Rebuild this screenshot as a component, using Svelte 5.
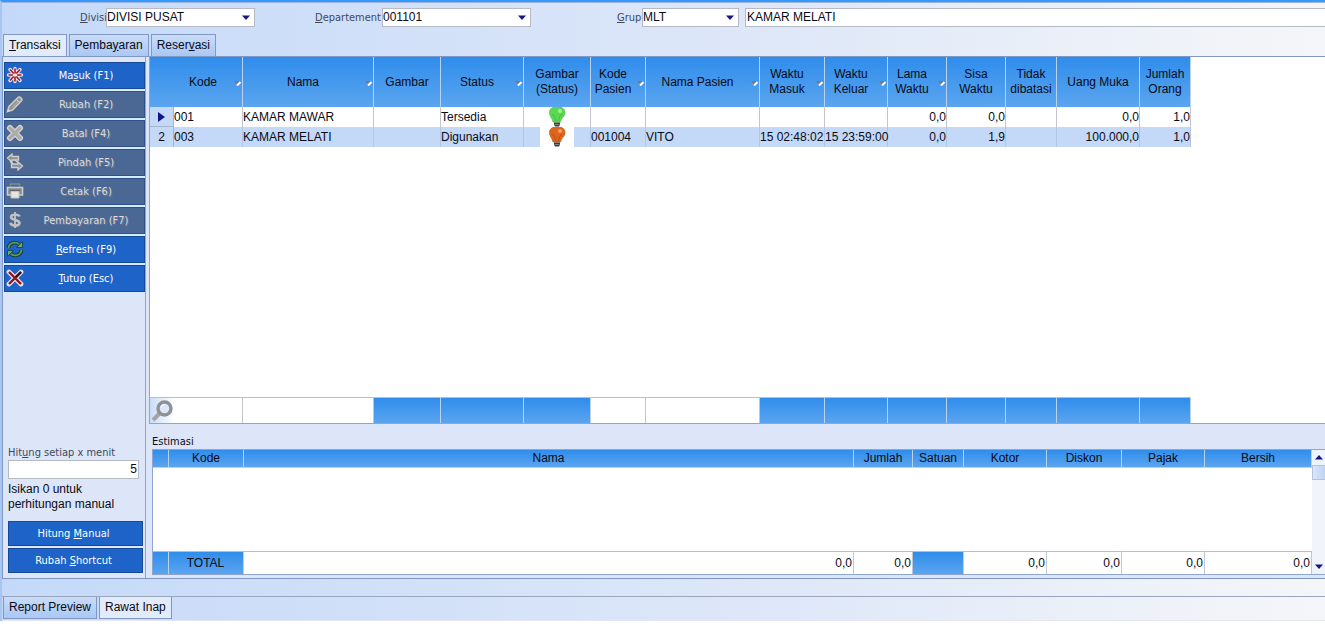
<script lang="ts">
  type Action = { label: string; icon: string; disabled?: boolean };
  type Column = { label: string; width: number; sortable?: boolean; searchable?: boolean; numeric?: boolean };

  let divisi = $state('DIVISI PUSAT');
  let departement = $state('001101');
  let grup = $state('MLT');
  let namaGrup = $state('KAMAR MELATI');
  let interval = $state('5');

  // "&" marks the access key that gets underlined
  const tabs = ['&Transaksi', 'Pemba&yaran', 'Reser&vasi'];
  let activeTab = $state(0);

  const windows = ['Report Preview', 'Rawat Inap'];
  let activeWindow = $state(1);

  const actions: Action[] = [
    { label: 'Ma&suk (F1)', icon: 'new' },
    { label: 'Rubah (F2)', icon: 'edit', disabled: true },
    { label: 'Batal (F4)', icon: 'cancel', disabled: true },
    { label: 'Pindah (F5)', icon: 'move', disabled: true },
    { label: 'Cetak (F6)', icon: 'print', disabled: true },
    { label: 'Pembayaran (F7)', icon: 'pay', disabled: true },
    { label: '&Refresh (F9)', icon: 'refresh' },
    { label: '&Tutup (Esc)', icon: 'close' }
  ];

  const columns: Column[] = [
    { label: 'Kode', width: 69, sortable: true, searchable: true },
    { label: 'Nama', width: 131, sortable: true, searchable: true },
    { label: 'Gambar', width: 67 },
    { label: 'Status', width: 83, sortable: true },
    { label: 'Gambar (Status)', width: 67 },
    { label: 'Kode Pasien', width: 55, sortable: true, searchable: true },
    { label: 'Nama Pasien', width: 114, sortable: true, searchable: true },
    { label: 'Waktu Masuk', width: 65, sortable: true },
    { label: 'Waktu Keluar', width: 63, sortable: true },
    { label: 'Lama Waktu', width: 59, sortable: true, numeric: true },
    { label: 'Sisa Waktu', width: 59, numeric: true },
    { label: 'Tidak dibatasi', width: 51 },
    { label: 'Uang Muka', width: 83, numeric: true },
    { label: 'Jumlah Orang', width: 51, numeric: true }
  ];
  const gridWidth = 24 + columns.reduce((sum, c) => sum + c.width, 0);

  const rooms = [
    ['001', 'KAMAR MAWAR', '', 'Tersedia', 'free', '', '', '', '', '0,0', '0,0', '', '0,0', '1,0'],
    ['003', 'KAMAR MELATI', '', 'Digunakan', 'used', '001004', 'VITO', '15 02:48:02', '15 23:59:00', '0,0', '1,9', '', '100.000,0', '1,0']
  ];

  const estimateColumns = [
    { label: 'Kode', width: 75, total: 'TOTAL' },
    { label: 'Nama', width: 0, total: '0,0' },
    { label: 'Jumlah', width: 59, total: '0,0' },
    { label: 'Satuan', width: 51, total: '' },
    { label: 'Kotor', width: 83, total: '0,0' },
    { label: 'Diskon', width: 75, total: '0,0' },
    { label: 'Pajak', width: 83, total: '0,0' },
    { label: 'Bersih', width: 107, total: '0,0' }
  ];
</script>

{#snippet accel(text: string)}
  {@const at = text.indexOf('&')}
  {#if at < 0}{text}{:else}{text.slice(0, at)}<u>{text[at + 1]}</u>{text.slice(at + 2)}{/if}
{/snippet}

{#snippet arrow(up = false)}
  <svg class="arrow" width="8" height="5" viewBox="0 0 8 5" aria-hidden="true">
    <path d={up ? 'M0 4.5 4 0 8 4.5z' : 'M0 .5h8L4 5z'} fill="#15158a" />
  </svg>
{/snippet}

{#snippet bulb(used: boolean)}
  <svg width="34" height="20" viewBox="0 0 34 20" role="img" aria-label={used ? 'Digunakan' : 'Tersedia'}>
    {#if used}<rect width="34" height="20" fill="#fff" />{/if}
    <path
      d="M13 15C12.500 11 9.500 9.500 9.500 5.500 9.500 2 12 .3 15 .3h4.500c3 0 5.500 2 5.500 5.200 0 4-4 5.500-4.500 9.500z"
      fill={used ? '#de6519' : '#5ad850'}
      stroke={used ? '#c25a18' : '#4cc848'}
      stroke-width=".8"
    />
    <path d="M12 7c2 1 3 4 4 7M22 7c-2 1-3 4-3.500 7" fill="none" stroke={used ? '#a8430b' : '#36ae3b'} opacity=".6" />
    <circle cx="20" cy="4" r="2" fill={used ? '#f8a162' : '#a7f29b'} />
    <path d="M14 15.500h6v2l-1 2h-4l-1-2z" fill="#403a38" />
    <path d="M14.500 17.500h5" stroke="#9a9490" stroke-width=".8" />
  </svg>
{/snippet}

{#snippet icon(name: string)}
  <svg class="icon" width="18" height="18" viewBox="0 0 18 18" fill="none" aria-hidden="true">
    {#if name === 'new'}
      <path d="M9 2.500v13M2.500 9h13M4 3.500l10 11M14 3.500l-10 11" stroke="#f1dde3" stroke-width="3.400" stroke-linecap="round" />
      <path d="M9 2.500v5M9 10.500v5M2.500 9h4.500M11 9h4.500M4 3.500l3.700 4M10.300 10.500l3.700 4M14 3.500l-3.700 4M7.700 10.500l-3.700 4" stroke="#96202c" stroke-width="1.600" />
    {:else if name === 'edit'}
      <path d="M1.500 16.500 3 11.500 12 2.500c1.500-1.500 5 1.500 3.500 3.300L6.500 15z" fill="#8f9192" stroke="#c9c9c7" stroke-width="1.600" />
      <path d="m6 12.500 6.500-6.500" stroke="#b8b8b6" />
      <path d="M10.500 4.500l3.500 3.200" stroke="#d8d8d6" />
      <path d="m1 17 1.500-3 1.700 1.500z" fill="#d8d8d6" />
    {:else if name === 'cancel'}
      <path d="m4 4 10 10M14 4 4 14" stroke="#d6d7d6" stroke-width="6" stroke-linecap="round" />
      <path d="m4 4 10 10M14 4 4 14" stroke="#acaca8" stroke-width="3.400" stroke-linecap="round" />
    {:else if name === 'move'}
      <path d="M1.500 5 6 1v2.500h6.500v3.500H6V9z" fill="#8e8f8e" stroke="#cfcfcd" stroke-width="1.300" />
      <path d="M16.500 13 12 9v2H5.500v3.500H12V17z" fill="#8e8f8e" stroke="#cfcfcd" stroke-width="1.300" />
      <path d="M4 8.500 7 11M9 7l3 2.500" stroke="#cfcfcd" stroke-width="1.500" />
    {:else if name === 'print'}
      <path d="M4.500 4.500V2h9v2.500" stroke="#85888c" stroke-width="1.500" />
      <path d="M1.500 5.500h15v7.500h-15z" fill="#85878a" stroke="#cdcdcc" stroke-width="1.600" />
      <path d="M5 9.500h8V16H5z" fill="#e4e4e3" stroke="#c4c4c2" />
      <path d="M4 8.500h10" stroke="#5e6368" />
    {:else if name === 'pay'}
      <path d="M9 1v16" stroke="#b9bab9" stroke-width="2" />
      <path d="M13.500 5.500C13 3.500 5 2.500 5 6s8.500 2.300 8.500 6-8.500 3.300-9-.2" stroke="#c2c2c0" stroke-width="2.600" />
    {:else if name === 'refresh'}
      <path d="M2.500 8C3 3 9 1 13 4M15.500 10c-.5 5-6.500 7-10.500 4" stroke="#173f38" stroke-width="3.800" />
      <path d="M2.500 8C3 3 9 1 13 4M15.500 10c-.5 5-6.500 7-10.500 4" stroke="#5f9a5c" stroke-width="1.800" />
      <path d="M16.500 1.500v6h-6zM1.500 16.500v-6h6z" fill="#6fa763" stroke="#173f38" stroke-width=".8" />
    {:else}
      <path d="m3 3 12 12M15 3 3 15" stroke="#e8dce6" stroke-width="4.800" stroke-linecap="round" />
      <path d="m3 3 12 12M15 3 3 15" stroke="#8a141c" stroke-width="2.400" />
      <path d="m10 8 5-5" stroke="#3a1016" stroke-width="2.400" />
    {/if}
  </svg>
{/snippet}

<div class="app">
  <form class="filters" onsubmit={(e) => e.preventDefault()}>
    <div class="field divisi">
      <label for="divisi">{@render accel('&Divisi')}</label>
      <span class="combo">
        <select id="divisi" bind:value={divisi}><option>DIVISI PUSAT</option></select>
        {@render arrow()}
      </span>
    </div>
    <div class="field departement">
      <label for="departement">{@render accel('&Departement')}</label>
      <span class="combo">
        <select id="departement" bind:value={departement}><option>001101</option></select>
        {@render arrow()}
      </span>
    </div>
    <div class="field grup">
      <label for="grup">{@render accel('&Grup')}</label>
      <span class="combo small">
        <select id="grup" bind:value={grup}><option>MLT</option></select>
        {@render arrow()}
      </span>
      <input class="grup-name" aria-label="Nama grup" bind:value={namaGrup} />
    </div>
  </form>

  <nav class="tabs">
    {#each tabs as tab, i}
      <button class:active={activeTab === i} onclick={() => (activeTab = i)}>{@render accel(tab)}</button>
    {/each}
  </nav>

  <main class="page">
    <aside class="sidebar">
      <div class="actions">
        {#each actions as action}
          <button class="action" disabled={action.disabled}>
            {@render icon(action.icon)}
            <span>{@render accel(action.label)}</span>
          </button>
        {/each}
      </div>

      <div class="timer">
        <label for="interval">{@render accel('Hit&ung setiap x menit')}</label>
        <input id="interval" bind:value={interval} />
        <p>Isikan 0 untuk perhitungan manual</p>
        <button>{@render accel('Hitung &Manual')}</button>
        <button>{@render accel('Rubah &Shortcut')}</button>
      </div>
    </aside>

    <section class="content">
      <div class="grid">
        <table class="rooms" style="width: {gridWidth}px">
          <colgroup>
            <col class="indicator-col" />
            {#each columns as column}
              <col style="width: {column.width}px" />
            {/each}
          </colgroup>
          <thead>
            <tr>
              <th class="corner"></th>
              {#each columns as column}
                <th class:sortable={column.sortable}>
                  {column.label}
                  {#if column.sortable}
                    <svg class="sort" width="7" height="6" viewBox="0 0 7 6" aria-hidden="true">
                      <path d="M0 1h7L3.500 5z" fill="#77797c" />
                      <path d="M3 5.500 6.500 2" stroke="#fff" stroke-width="2" />
                    </svg>
                  {/if}
                </th>
              {/each}
            </tr>
          </thead>
          <tbody>
            {#each rooms as room, r}
              <tr class:alt={r % 2 === 1}>
                <th class="indicator" scope="row">
                  {#if r === 0}
                    <svg width="7" height="10" viewBox="0 0 7 10" role="img" aria-label="Baris aktif">
                      <path d="M0 0v10l7-5z" fill="#15158a" />
                    </svg>
                  {:else}{r + 1}{/if}
                </th>
                {#each room as value, c}
                  {#if c === 4}
                    <td class="picture">{@render bulb(value === 'used')}</td>
                  {:else}
                    <td class:numeric={columns[c].numeric}>{value}</td>
                  {/if}
                {/each}
              </tr>
            {/each}
            <tr class="filler"><td colspan={columns.length + 1}></td></tr>
          </tbody>
          <tfoot>
            <tr>
              <td class="search">
                <svg width="22" height="22" viewBox="0 0 22 22" role="img" aria-label="Cari">
                  <path d="m2 20 7-7" stroke="#a4a4a6" stroke-width="4" />
                  <circle cx="13.500" cy="8.500" r="6.500" fill="#dce6f8" stroke="#8e9094" stroke-width="3.400" />
                  <path d="M10 7.500a4 4 0 0 1 3.500-3" fill="none" stroke="#fff" />
                </svg>
              </td>
              {#each columns as column}
                <td class:blocked={!column.searchable}></td>
              {/each}
            </tr>
          </tfoot>
        </table>
      </div>

      <h2>Estimasi</h2>

      <div class="estimate">
        <table>
          <colgroup>
            <col class="narrow-col" />
            {#each estimateColumns as column}
              <col style={column.width ? `width: ${column.width}px` : undefined} />
            {/each}
          </colgroup>
          <thead>
            <tr>
              <th></th>
              {#each estimateColumns as column}
                <th>{column.label}</th>
              {/each}
            </tr>
          </thead>
          <tbody>
            <tr><td colspan={estimateColumns.length + 1}></td></tr>
          </tbody>
          <tfoot>
            <tr>
              <td class="blocked"></td>
              {#each estimateColumns as column, i}
                {#if i === 0}
                  <th class="blocked" scope="row">{column.total}</th>
                {:else}
                  <td class:blocked={!column.total}>{column.total}</td>
                {/if}
              {/each}
            </tr>
          </tfoot>
        </table>
        <div class="scrollbar">
          <button aria-label="Gulir ke atas">{@render arrow(true)}</button>
          <div class="track"><div class="thumb"></div></div>
          <button aria-label="Gulir ke bawah">{@render arrow()}</button>
        </div>
      </div>
    </section>
  </main>

  <nav class="windows">
    {#each windows as name, i}
      <button class:active={activeWindow === i} onclick={() => (activeWindow = i)}>{name}</button>
    {/each}
  </nav>
</div>

<style>
  :global(body) {
    background: #fff;
    overflow: hidden;
  }

  .app {
    box-sizing: border-box;
    border-top: 2px solid #3399ff;
    border-left: 2px solid #a8c6f2;
    background: linear-gradient(90deg, #c4d9f9, #dfe8f8 60%, #f5f6f9);
    color: #0a0a14;
    font: 12px/15px 'Liberation Sans', Arial, sans-serif;
  }

  .app :global(*) {
    box-sizing: border-box;
  }

  button,
  input,
  select {
    margin: 0;
    font: inherit;
    color: inherit;
    border-radius: 0;
  }

  /* Filter bar */
  .filters {
    display: flex;
    height: 32px;
    padding: 5px 0 0 78px;
    border-top: 1px solid #9fb4d8;
  }

  .field {
    display: flex;
    align-items: flex-start;
    gap: 1px;
  }

  .field label,
  .timer label,
  .action,
  .timer button,
  h2 {
    font: 11px/14px 'DejaVu Sans Condensed', Tahoma, 'DejaVu Sans', sans-serif;
  }

  .field label {
    padding-top: 3px;
    color: #40485a;
    text-align: right;
    white-space: nowrap;
  }

  .divisi label {
    width: 25px;
  }

  .departement {
    margin-left: 60px;
  }

  .departement label {
    width: 66px;
  }

  .grup {
    flex: 1;
    margin-left: 86px;
  }

  .grup label {
    width: 24px;
  }

  .combo {
    display: grid;
    align-items: center;
    width: 149px;
  }

  .combo.small {
    width: 97px;
  }

  .combo select {
    grid-area: 1 / 1;
    appearance: none;
    height: 19px;
    padding: 0 16px 1px 0;
    background: #fff;
    border: 1px solid #b5bac4;
  }

  .combo :global(.arrow) {
    grid-area: 1 / 1;
    justify-self: end;
    margin-right: 5px;
    pointer-events: none;
  }

  .grup-name {
    flex: 1;
    min-width: 0;
    height: 19px;
    margin-left: 5px;
    padding: 0 1px 2px;
    background: #fff;
    border: 1px solid #b5bac4;
    border-right: 0;
  }

  /* Tabs */
  .tabs,
  .windows {
    display: flex;
    gap: 2px;
    padding-left: 1px;
  }

  .tabs button,
  .windows button {
    height: 22px;
    padding: 0 5px;
    background: linear-gradient(#c9dcf8, #a9c8f4);
    border: 1px solid #8298c4;
    white-space: nowrap;
  }

  .tabs button {
    border-bottom: 0;
  }

  .tabs button.active,
  .windows button.active {
    background: #e2ebfa;
  }

  .windows {
    height: 25px;
    margin-top: 17px;
    border-top: 1px solid #9ba5bb;
    border-bottom: 1px solid #e4e7f2;
  }

  .windows button {
    border-top: 0;
  }

  /* Page */
  .page {
    display: flex;
    border: 1px solid #7f97c4;
    border-right: 0;
    background: #dce6f8;
  }

  .sidebar {
    display: flex;
    flex: none;
    flex-direction: column;
    justify-content: space-between;
    width: 143px;
    border-right: 1px solid #8fa5cf;
  }

  .actions {
    display: flex;
    flex-direction: column;
    gap: 2px;
    padding: 5px 0 0 1px;
  }

  .action {
    display: flex;
    align-items: center;
    height: 27px;
    padding: 0 0 0 1px;
    background: #1e64c8;
    border: 1px solid #174a96;
    box-shadow: 0 2px #d4ebfd;
    color: #fff;
  }

  .action:disabled {
    background: #4b6894;
    border-color: #2f508a;
    color: #dcdcda;
    text-shadow: 1px 1px #6d7d98;
  }

  .action span {
    flex: 1;
    padding-left: 4px;
    text-align: center;
    white-space: nowrap;
  }

  .action :global(.icon) {
    flex: none;
    margin-bottom: 2px;
  }

  .timer {
    display: flex;
    flex-direction: column;
    padding: 0 2px 5px 5px;
  }

  .timer label {
    color: #40485a;
  }

  .timer input {
    width: 131px;
    height: 19px;
    padding: 0 1px 2px;
    background: #fff;
    border: 1px solid #b5bac4;
    text-align: right;
  }

  .timer p {
    width: 120px;
    margin: 3px 0 9px;
  }

  .timer button {
    height: 25px;
    padding: 0 4px 0 0;
    background: #1e64c8;
    border: 1px solid #174a96;
    color: #fff;
  }

  .timer button + button {
    margin-top: 2px;
  }

  .content {
    display: flex;
    flex: 1;
    flex-direction: column;
    min-width: 0;
    padding: 0 0 3px 3px;
  }

  table {
    border-collapse: separate;
    border-spacing: 0;
    table-layout: fixed;
  }

  th,
  td {
    padding: 0;
    font-weight: normal;
  }

  /* Room grid */
  .grid {
    overflow: hidden;
    background: #fff;
    border-left: 1px solid #8fa5cf;
    border-bottom: 1px solid #8fa5cf;
  }

  .indicator-col {
    width: 24px;
  }

  .rooms thead th {
    position: relative;
    height: 50px;
    background: linear-gradient(#2f8deb, #5ba5f0);
    border-right: 1px solid #b9d2ee;
  }

  .rooms thead .corner {
    border-right: 0;
  }

  .rooms thead .sortable {
    padding-right: 10px;
  }

  .sort {
    position: absolute;
    right: 1px;
    top: 23px;
  }

  .rooms tbody td {
    height: 20px;
    border-right: 1px solid #c3c6cc;
    white-space: nowrap;
  }

  .rooms .alt td {
    background: #c4d9f8;
    border-right-color: #b3c5e2;
  }

  .rooms .indicator {
    background: #c4d9f8;
    border-right: 1px solid #a5b5d0;
    border-bottom: 1px solid #a5b5d0;
    text-align: center;
  }

  .rooms .alt .indicator {
    border-bottom: 0;
  }

  .rooms .numeric {
    text-align: right;
  }

  .indicator svg,
  .picture :global(svg) {
    display: block;
    margin: 0 auto;
  }

  .rooms .filler td {
    height: 250px;
    border: 0;
  }

  .rooms tfoot td {
    height: 26px;
    border-top: 1px solid #b9bdc6;
    border-right: 1px solid #c3c6cc;
  }

  .rooms tfoot .search {
    background: linear-gradient(90deg, #c9dcf8, #fff);
    border-right: 0;
  }

  .search svg {
    display: block;
    margin-left: 1px;
  }

  .rooms tfoot .blocked,
  .estimate .blocked {
    background: linear-gradient(#2f8deb, #5ba5f0);
    border-right-color: #b9d2ee;
  }

  /* Estimate */
  h2 {
    margin: 11px 0 0 3px;
  }

  .estimate {
    display: flex;
    margin-left: 3px;
    background: #fff;
    border: 1px solid #8fa5cf;
    border-right: 0;
  }

  .estimate table {
    flex: 1;
    min-width: 0;
  }

  .narrow-col {
    width: 16px;
  }

  .estimate thead th {
    height: 18px;
    background: linear-gradient(#2f8deb, #5ba5f0);
    border-right: 1px solid #b9d2ee;
    border-bottom: 1px solid #b9d2ee;
  }

  .estimate tbody td {
    height: 83px;
  }

  .estimate tfoot td,
  .estimate tfoot th {
    height: 23px;
    padding-right: 1px;
    border-top: 1px solid #b9bdc6;
    border-right: 1px solid #c3c6cc;
    text-align: right;
  }

  .estimate tfoot th {
    text-align: center;
  }

  .scrollbar {
    display: flex;
    flex: none;
    flex-direction: column;
    width: 13px;
    background: #f1f4fb;
  }

  .scrollbar button {
    display: grid;
    place-items: center;
    height: 15px;
    padding: 0;
    background: #eef3fc;
    border: 0;
  }

  .track {
    flex: 1;
  }

  .thumb {
    height: 15px;
    background: linear-gradient(90deg, #dbe6fa, #bed2f4);
    border: 1px solid #b5c3dc;
    border-right: 0;
  }
</style>
